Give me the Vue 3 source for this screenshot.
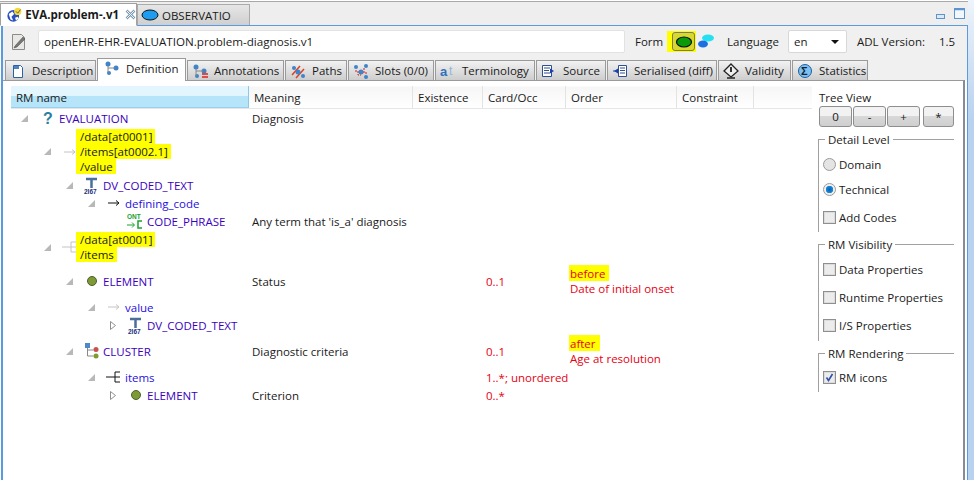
<template>
  <div class="window">
    <div class="editor-tabs">
      <div class="etab active">
        <svg width="18" height="18" viewBox="0 0 18 18"><circle cx="8" cy="10" r="6.500" fill="#2a4fc0"/><path d="M3 8l4-3 2 3-3 3 2 4-3-1zM10 12l3-1 1 2-3 2z" fill="#fff"/><circle cx="13" cy="5" r="4" fill="#f4d93a"/><path d="M11 5l2 2 3-4" stroke="#555" fill="none"/></svg>
        <span class="etab-title">EVA.problem-.v1</span>
        <svg class="close" width="11" height="11" viewBox="0 0 11 11"><path d="M1.500 1.500l8 8M9.500 1.500l-8 8" stroke="#7d9bb5" stroke-width="2.600"/><path d="M1.500 1.500l8 8M9.500 1.500l-8 8" stroke="#eef3f7" stroke-width="1"/></svg>
      </div>
      <div class="etab">
        <svg width="18" height="12" viewBox="0 0 18 12"><ellipse cx="9" cy="6" rx="8" ry="5" fill="#1d9cf0" stroke="#111" stroke-width="1"/></svg>
        <span>OBSERVATIO</span>
      </div>
      <div class="win-buttons">
        <svg width="9" height="5" viewBox="0 0 9 5"><rect x=".5" y=".5" width="8" height="4" fill="#dbe8f6" stroke="#5c94cf"/></svg>
        <svg width="11" height="11" viewBox="0 0 11 11"><rect x=".5" y=".5" width="10" height="10" fill="#f2f7fc" stroke="#5c94cf"/><path d="M1 1.500h9" stroke="#5c94cf" stroke-width="1.500"/></svg>
      </div>
    </div>

    <div class="editor-body">
      <div class="toolbar">
        <svg class="doc-icon" width="18" height="18" viewBox="0 0 18 18"><path d="M2.500 1.500h9l3 3v12h-12z" fill="#e8e8e6" stroke="#8b8b88"/><path d="M5 13l8-9 2 2-8 8-3 1z" fill="#777" stroke="#444" stroke-width=".5"/></svg>
        <div class="id-input">openEHR-EHR-EVALUATION.problem-diagnosis.v1</div>
        <span class="form-label">Form</span>
        <div class="form-toggle">
          <div class="toggle-btn">
            <svg width="18" height="12" viewBox="0 0 18 12"><ellipse cx="9" cy="6" rx="7.500" ry="5" fill="#0a9a0a" stroke="#111" stroke-width="1.200"/></svg>
          </div>
          <svg width="18" height="20" viewBox="0 0 18 20"><ellipse cx="11" cy="6" rx="6" ry="3.500" fill="#25e0f0"/><ellipse cx="6" cy="12" rx="5" ry="3.500" fill="#1b6fe0"/></svg>
        </div>
        <span class="lang-label">Language</span>
        <div class="lang-select">en<i class="caret"></i></div>
        <span class="adl-label">ADL Version:</span>
        <span class="adl-value">1.5</span>
      </div>

      <div class="view-tabs">
        <div v-for="tab in tabs" :key="tab.label" class="vtab" :class="{ selected: tab.selected }" :style="{ width: tab.width + 'px' }">
          <svg width="18" height="16" viewBox="0 0 18 16" v-html="tab.icon"></svg>
          <span>{{ tab.label }}</span>
        </div>
      </div>

      <div class="view-panel">
        <div class="tree-pane">
          <div class="tree-head">
            <div v-for="(col, i) in columns" :key="col.name" class="th" :class="{ sorted: i === 0 }" :style="{ width: col.width + 'px' }">{{ col.name }}</div>
          </div>
          <div class="tree-body">
            <div v-for="(row, i) in rows" :key="i" class="row" :class="{ multi: row.lines || row.orderMark }">
              <div class="cell name-cell" :style="{ paddingLeft: row.twisty + 'px' }">
                <svg class="twisty" width="9" height="9" viewBox="0 0 9 9">
                  <path v-if="row.open === true" d="M8 1v7H1z" fill="#b8b8b8"/>
                  <path v-else-if="row.open === false" d="M1.500 .5l5 4-5 4z" fill="#fff" stroke="#8f8f8f"/>
                </svg>
                <svg class="node-icon" :style="{ marginLeft: row.iconGap + 'px' }" width="18" height="18" viewBox="0 0 18 18" v-html="icons[row.icon]"></svg>
                <div v-if="row.lines" class="marked">
                  <span v-for="line in row.lines" :key="line">{{ line }}</span>
                </div>
                <span v-else class="node-name" :class="{ attr: row.attr }">{{ row.name }}</span>
              </div>
              <div class="cell meaning-cell">{{ row.meaning }}</div>
              <div class="cell occ">{{ row.occ }}</div>
              <div class="cell order">
                <span v-if="row.orderMark" class="order-mark">{{ row.orderMark }}</span>
                <span v-if="row.orderText">{{ row.orderText }}</span>
              </div>
            </div>
          </div>
        </div>

        <div class="side">
          <div class="tv-label">Tree View</div>
          <div class="tv-buttons">
            <button>0</button>
            <button>-</button>
            <button>+</button>
            <button class="star">*</button>
          </div>

          <fieldset class="group detail">
            <legend>Detail Level</legend>
            <label><i class="radio"></i>Domain</label>
            <label><i class="radio on"></i>Technical</label>
            <label><i class="check"></i>Add Codes</label>
          </fieldset>
          <fieldset class="group visibility">
            <legend>RM Visibility</legend>
            <label><i class="check"></i>Data Properties</label>
            <label><i class="check"></i>Runtime Properties</label>
            <label><i class="check"></i>I/S Properties</label>
          </fieldset>
          <fieldset class="group rendering">
            <legend>RM Rendering</legend>
            <label><i class="check"><svg width="11" height="11" viewBox="0 0 11 11"><path d="M2.500 5.500l2 3 4-6.500" fill="none" stroke="#2f4fa8" stroke-width="1.600"/></svg></i>RM icons</label>
          </fieldset>
        </div>
      </div>
    </div>
  </div>
</template>

<script setup>
const dots = '<circle cx="5" cy="4" r="2.500" fill="#3f83c8"/><circle cx="13" cy="8" r="2.500" fill="#3f83c8"/><circle cx="6" cy="13" r="2" fill="#3f83c8"/><path d="M5 6v7M5 8h7" stroke="#888"/>'

const tabs = [
  { label: 'Description', width: 91, icon: '<path d="M4.500 2.500h7l2 2v10h-9z" fill="#fff" stroke="#2f5fa0"/><path d="M5 3h5v3H5z" fill="#4d82c4"/>' },
  { label: 'Definition', width: 89, selected: true, icon: dots },
  { label: 'Annotations', width: 97, icon: dots + '<path d="M11 14h6M11 11h6" stroke="#e02020" stroke-width="1.500"/>' },
  { label: 'Paths', width: 62, icon: '<path d="M3 12L11 3M7 15l8-9" stroke="#e04020" stroke-width="1.500"/><circle cx="5" cy="5" r="2" fill="#3f83c8"/><circle cx="9" cy="9" r="2.500" fill="#3f83c8"/><circle cx="14" cy="13" r="2" fill="#3f83c8"/>' },
  { label: 'Slots (0/0)', width: 86, icon: '<circle cx="4" cy="4" r="2" fill="#3f83c8"/><circle cx="14" cy="3" r="2" fill="#3f83c8"/><circle cx="9" cy="9" r="2.500" fill="#3f83c8"/><circle cx="14" cy="14" r="2" fill="#3f83c8"/><path d="M3 8h3v4h3M12 5v5h3" stroke="#d02020" fill="none" stroke-dasharray="2 1"/>' },
  { label: 'Terminology', width: 100, icon: '<text x="1" y="13" font-family="Liberation Sans" font-size="13" font-weight="700" fill="#2f6fc0">a</text><text x="10" y="12" font-family="Liberation Sans" font-size="12" fill="#8fb4dc">t</text>' },
  { label: 'Source', width: 70, icon: '<path d="M2.500 2.500h9v11h-9z" fill="#fff" stroke="#2f4f90"/><path d="M4 5h6M4 7.500h5M4 10h6" stroke="#2f4f90"/><path d="M10 5.500l4 2.500-4 2.500z" fill="#1a40b0"/>' },
  { label: 'Serialised (diff)', width: 110, icon: '<path d="M7.500 2.500h8v11h-8z" fill="#fff" stroke="#2f4f90"/><path d="M9 5h5M9 7.500h5M9 10h5" stroke="#2f4f90"/><path d="M7 5.500l-4 2.500 4 2.500z" fill="#1a40b0"/><path d="M2 8h4" stroke="#1a40b0"/>' },
  { label: 'Validity', width: 73, icon: '<path d="M9 1l7 7-7 6-7-6z" fill="#eee" stroke="#222" stroke-width="1.300"/><path d="M9 4v5" stroke="#333" stroke-width="2"/><path d="M5 15h8" stroke="#222" stroke-width="1.500"/>' },
  { label: 'Statistics', width: 76, icon: '<circle cx="9" cy="8" r="6.500" fill="#7ec0f0" stroke="#1a5fa8"/><text x="5" y="12" font-family="Liberation Sans" font-size="11" font-weight="700" fill="#123">Σ</text>' }
]

const columns = [
  { name: 'RM name', width: 238 },
  { name: 'Meaning', width: 164 },
  { name: 'Existence', width: 70 },
  { name: 'Card/Occ', width: 83 },
  { name: 'Order', width: 111 },
  { name: 'Constraint', width: 77 }
]

const icons = {
  question: '<text x="4" y="15" font-family="Liberation Sans" font-size="16" font-weight="700" fill="#2a7f9e">?</text>',
  arrowGrey: '<path d="M3 9h11M11 6.500l3 2.500-3 2.500" stroke="#c4c4c4" fill="none"/>',
  arrow: '<path d="M3 9h11M11 6.500l3 2.500-3 2.500" stroke="#111" fill="none"/>',
  text: '<path d="M3 3h11M8.500 3v9" stroke="#4a6f9a" stroke-width="2.500"/><text x="1" y="17.500" font-family="Liberation Sans" font-size="6.500" font-weight="700" fill="#1a2f80">2I67</text>',
  ont: '<text x="0" y="7" font-family="Liberation Sans" font-size="6.500" font-weight="700" fill="#19a32f">ONT</text><path d="M0 13h7M5 10.500l2.500 2.500-2.500 2.500" stroke="#19a32f" fill="none"/><path d="M15 9h-4v7h4" stroke="#19a32f" stroke-width="1.500" fill="none"/>',
  element: '<circle cx="9" cy="9" r="4.500" fill="#7e9a35" stroke="#4d5f30"/>',
  cluster: '<path d="M4.500 5v9h6M4.500 8h6" stroke="#888" fill="none"/><rect x="2" y="1" width="5" height="5" fill="#4a8ac8"/><circle cx="13" cy="7.500" r="2.500" fill="#c85050"/><circle cx="13" cy="14" r="2.500" fill="#7e9a35"/>',
  itemsGrey: '<path d="M1 9h9M10 4h5M10 9h5M10 14h5M10 4v10" stroke="#c4c4c4" fill="none"/>',
  items: '<path d="M1 9h9M10 4h5M10 9h5M10 14h5M10 4v10" stroke="#111" fill="none"/>'
}

const rows = [
  { twisty: 9, open: true, icon: 'question', iconGap: 10, name: 'EVALUATION', meaning: 'Diagnosis' },
  { twisty: 32, open: true, icon: 'arrowGrey', iconGap: 9, lines: ['/data[at0001]', '/items[at0002.1]', '/value'] },
  { twisty: 54, open: true, icon: 'text', iconGap: 9, name: 'DV_CODED_TEXT' },
  { twisty: 76, open: true, icon: 'arrow', iconGap: 9, name: 'defining_code', attr: true },
  { twisty: 98, icon: 'ont', iconGap: 9, name: 'CODE_PHRASE', meaning: "Any term that 'is_a' diagnosis" },
  { twisty: 32, open: true, icon: 'itemsGrey', iconGap: 9, lines: ['/data[at0001]', '/items'] },
  { twisty: 54, open: true, icon: 'element', iconGap: 9, name: 'ELEMENT', meaning: 'Status', occ: '0..1', orderMark: 'before', orderText: 'Date of initial onset' },
  { twisty: 76, open: true, icon: 'arrowGrey', iconGap: 9, name: 'value', attr: true },
  { twisty: 98, open: false, icon: 'text', iconGap: 9, name: 'DV_CODED_TEXT' },
  { twisty: 54, open: true, icon: 'cluster', iconGap: 9, name: 'CLUSTER', meaning: 'Diagnostic criteria', occ: '0..1', orderMark: 'after', orderText: 'Age at resolution' },
  { twisty: 76, open: true, icon: 'items', iconGap: 9, name: 'items', attr: true, occ: '1..*; unordered' },
  { twisty: 98, open: false, icon: 'element', iconGap: 9, name: 'ELEMENT', meaning: 'Criterion', occ: '0..*' }
]
</script>

<style scoped>
.window {
  width: 974px;
  height: 480px;
  overflow: hidden;
  background: #fff linear-gradient(#eef4fb, #b8d2f0 120px) no-repeat right / 6px 100%;
  font-family: "Open Sans", "Noto Sans", sans-serif;
  font-size: 11.5px;
  color: #1a1a1a;
  box-sizing: border-box;
  padding-right: 6px;
}

.editor-tabs {
  margin-top: 1px;
  height: 23px;
  display: flex;
  align-items: flex-end;
  background: #eeeeee;
  border-top: 1px solid #a8a8a8;
  border-bottom: 1px solid #5c9ade;
  position: relative;
}

.etab {
  height: 21px;
  width: 113px;
  box-sizing: border-box;
  display: flex;
  align-items: center;
  gap: 3px;
  padding-left: 3px;
  background: linear-gradient(#e6e6e6, #cfcfcf);
  border: 1px solid #aaa;
  border-bottom: none;
}

.etab.active {
  width: 137px;
  height: 23px;
  padding-left: 5px;
  background: #fff;
  border-color: #a0a0a0;
  border-bottom: 1px solid #fff;
  margin-bottom: -1px;
  position: relative;
}

.etab-title {
  font-weight: 700;
  margin-right: 3px;
}

.close {
  flex: none;
}

.win-buttons {
  margin-left: auto;
  align-self: center;
  display: flex;
  align-items: flex-end;
  gap: 9px;
  padding-right: 3px;
}

.editor-body {
  height: 454px;
  margin-left: 1px;
  box-sizing: border-box;
  border-left: 2px solid #5c9ade;
  border-right: 1px solid #5c9ade;
  background: linear-gradient(#f0f0f0 54px, #fff 54px);
  padding-right: 2px;
  display: flex;
  flex-direction: column;
}

.toolbar {
  height: 34px;
  box-sizing: border-box;
  display: flex;
  align-items: center;
  padding: 0 0 3px 7px;
  flex: none;
}

.doc-icon {
  margin-right: 10px;
}

.id-input {
  width: 587px;
  height: 23px;
  box-sizing: border-box;
  line-height: 21px;
  padding-left: 5px;
  background: #fff;
  border: 1px solid #e2e2e2;
  border-radius: 2px;
  font-size: 11.63px;
  margin-right: 10px;
}

.form-label {
  width: 32px;
}

.form-toggle {
  display: flex;
  align-items: center;
  background: linear-gradient(#ffff00, #ffff00) no-repeat 0 0 / 29px 100%;
  height: 21px;
}

.toggle-btn {
  width: 23px;
  height: 19px;
  box-sizing: border-box;
  margin: 0 2px 0 5px;
  display: flex;
  align-items: center;
  justify-content: center;
  border: 1px solid #7d7d50;
  border-radius: 3px;
  background: #d8d830;
}

.lang-label {
  margin-left: 12px;
  width: 61px;
}

.lang-select {
  width: 59px;
  height: 23px;
  box-sizing: border-box;
  line-height: 22px;
  padding-left: 5px;
  background: #fff;
  border: 1px solid #d8d8d8;
  border-radius: 2px;
  position: relative;
  margin-right: 10px;
}

.caret {
  position: absolute;
  right: 7px;
  top: 9px;
  border: 4px solid transparent;
  border-top: 4px solid #111;
}

.adl-label {
  width: 82px;
}

.view-tabs {
  height: 20px;
  display: flex;
  align-items: flex-end;
  padding-left: 2px;
  flex: none;
  gap: 1px;
  position: relative;
}

.vtab {
  height: 20px;
  box-sizing: border-box;
  display: flex;
  align-items: center;
  gap: 5px;
  padding-left: 3px;
  background: linear-gradient(#f2f2f2, #cdcdcd);
  border: 1px solid #9a9a9a;
  border-bottom: none;
  white-space: nowrap;
}

.vtab.selected {
  height: 23px;
  background: #fff;
  position: relative;
  margin-bottom: -1px;
  z-index: 1;
  padding: 0 0 4px 5px;
}

.view-panel {
  flex: 1;
  display: flex;
  background: #fff;
  border-top: 1px solid #9a9a9a;
  border-right: 2px solid #8a8a94;
  padding-left: 8px;
  min-height: 0;
}

.tree-pane {
  width: 801px;
  flex: none;
}

.tree-head {
  height: 28px;
  padding-top: 5px;
  box-sizing: border-box;
  display: flex;
  background: linear-gradient(#fff 0, #fff 5px, #f6f6f6 6px, #fff 27px);
  border-bottom: 1px solid #e6e6e6;
}

.th {
  height: 22px;
  line-height: 23px;
  padding-left: 5px;
  box-sizing: border-box;
  border-right: 1px solid #e3e3e3;
  flex: none;
}

.th.sorted {
  background: linear-gradient(#e3f6fd 45%, #b6e4f8 50%, #b6e4f8);
  border-right: 1px solid #8fc8e6;
  border-bottom: 1px solid #96d0ee;
}

.row {
  display: flex;
  align-items: center;
  min-height: 18px;
  line-height: 15px;
  white-space: nowrap;
}

.row.multi {
  padding: 2px 0;
}

.cell {
  flex: none;
  box-sizing: border-box;
}

.name-cell {
  width: 241px;
  display: flex;
  align-items: center;
}

.meaning-cell {
  width: 234px;
}

.twisty {
  flex: none;
}

.node-icon {
  flex: none;
  margin-right: 2px;
}

.node-name {
  color: #3a00c0;
}

.node-name.attr {
  color: #1f10e0;
}

.marked {
  display: flex;
  flex-direction: column;
  align-items: flex-start;
  margin-left: -5px;
}

.marked span {
  background: #ffff00;
  padding: 0 3px 0 4px;
}

.order {
  color: #e60012;
  display: flex;
  flex-direction: column;
  align-items: flex-start;
}

.occ {
  width: 84px;
  color: #e60012;
}

.order-mark {
  background: #ffff00;
  padding: 1px 4px 0 1px;
  margin: -1px 0 0 -1px;
}

.side {
  flex: 1;
  padding: 9px 0 0 7px;
  min-width: 0;
}

.tv-label {
  height: 15px;
  line-height: 15px;
  margin-bottom: 1px;
}

.tv-buttons {
  display: flex;
  gap: 1px;
}

.tv-buttons button {
  width: 33px;
  height: 21px;
  padding: 0;
  font: inherit;
  color: inherit;
  border: 1px solid #8e8e8e;
  border-radius: 3px;
  background: linear-gradient(#f2f2f2 50%, #d8d8d8 50%, #cfcfcf);
}

.tv-buttons .star {
  width: 31px;
  margin-left: 2px;
}

.group {
  margin: 5px 0 0 -1px;
  padding: 0 0 0 4px;
  border: none;
  border-top: 1px solid #a0a0a0;
  border-left: 1px solid #a0a0a0;
  display: flex;
  flex-direction: column;
  width: 136px;
  box-sizing: border-box;
}

.group legend {
  padding: 0 3px;
  margin-left: 2px;
  line-height: 15px;
}

.group label {
  display: flex;
  align-items: center;
  height: 28px;
  gap: 3px;
}

.detail { height: 100px; padding-top: 5px; }
.visibility { height: 104px; padding-top: 3px; }
.rendering { height: 46px; padding-top: 2px; }

.detail label { height: 25px; }
.detail label:last-child { height: 30px; }

.radio {
  width: 11px;
  height: 11px;
  flex: none;
  border-radius: 50%;
  border: 1px solid #9a9a9a;
  background: #e4e4e4;
}

.radio.on {
  background: radial-gradient(circle, #0a5fb0 0, #1a8ad8 45%, #f0f0f0 50%);
}

.check {
  width: 11px;
  height: 11px;
  flex: none;
  display: flex;
  border: 1px solid #8f8f8f;
  outline: 1px solid #dcdcdc;
  outline-offset: -2px;
  background: #ececec;
}
</style>

<style>
html, body { margin: 0; background: #fff; }
</style>
